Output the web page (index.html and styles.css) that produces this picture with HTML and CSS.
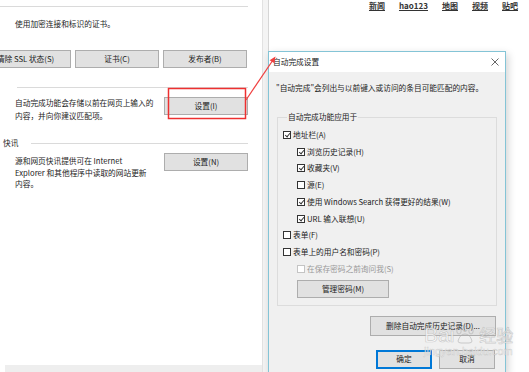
FILE: index.html
```html
<!DOCTYPE html>
<html lang="zh-CN">
<head>
<meta charset="utf-8">
<title>自动完成设置</title>
<link rel="stylesheet" href="styles.css">
</head>
<body>
<div class="desktop">
  <section class="options">
    <div class="rule top-rule"></div>
    <p class="cert-text">使用加密连接和标识的证书。</p>
    <div class="btn-row">
      <button class="btn wide ssl">清除 SSL 状态(S)</button>
      <button class="btn wide">证书(C)</button>
      <button class="btn wide">发布者(B)</button>
    </div>
    <div class="rule sep"></div>
    <div class="section auto">
      <p class="desc">自动完成功能会存储以前在网页上输入的<br>内容，并向你建议匹配项。</p>
      <button class="btn wide side">设置(I)</button>
    </div>
    <div class="heading"><span>快讯</span><div class="heading-line"></div></div>
    <div class="section feeds">
      <p class="desc">源和网页快讯提供可在 Internet<br>Explorer 和其他程序中读取的网站更新<br>内容。</p>
      <button class="btn wide side">设置(N)</button>
    </div>
    <div class="options-foot"></div>
  </section>
  <div class="frame"></div>
  <main class="page">
    <nav class="links">
      <a>新闻</a><a>hao123</a><a>地图</a><a>视频</a><a>贴吧</a>
    </nav>
  </main>
</div>

<div class="dialog">
  <div class="titlebar">
    <span class="title">自动完成设置</span>
    <svg class="close" width="8" height="8" viewBox="0 0 8 8"><path d="M0.5 0.5 L7.5 7.5 M7.5 0.5 L0.5 7.5" stroke="#555" stroke-width="0.9" fill="none"/></svg>
  </div>
  <div class="dialog-body">
    <p class="intro">"自动完成"会列出与以前键入或访问的条目可能匹配的内容。</p>
    <fieldset class="group">
      <legend>自动完成功能应用于</legend>
      <label class="row"><span class="cb checked"></span>地址栏(A)</label>
      <label class="row sub"><span class="cb checked"></span>浏览历史记录(H)</label>
      <label class="row sub"><span class="cb checked"></span>收藏夹(V)</label>
      <label class="row sub"><span class="cb"></span>源(E)</label>
      <label class="row sub"><span class="cb checked"></span>使用 Windows Search 获得更好的结果(W)</label>
      <label class="row sub"><span class="cb checked"></span>URL 输入联想(U)</label>
      <label class="row"><span class="cb"></span>表单(F)</label>
      <label class="row"><span class="cb"></span>表单上的用户名和密码(P)</label>
      <label class="row sub disabled"><span class="cb"></span>在保存密码之前询问我(S)</label>
      <button class="btn manage">管理密码(M)</button>
    </fieldset>
    <div class="delete-row"><button class="btn delete">删除自动完成历史记录(D)...</button></div>
    <div class="action-row">
      <button class="btn action default">确定</button>
      <button class="btn action">取消</button>
    </div>
  </div>
</div>

<div class="watermark">
  <div class="wm-logo"><span>Bai</span><svg class="paw" width="22" height="18" viewBox="0 0 22 18"><g fill="none" stroke="rgba(170,170,170,0.55)" stroke-width="1"><ellipse cx="5" cy="5" rx="2.2" ry="3"/><ellipse cx="11" cy="3" rx="2.2" ry="2.6"/><ellipse cx="17" cy="5" rx="2.2" ry="3"/><path d="M4 15 Q6 8 11 8 Q16 8 18 15 Q18 17 15 17 L7 17 Q4 17 4 15 Z"/></g></svg><span class="wm-cn">经验</span></div>
  <div class="wm-url">jingyan.baidu.com</div>
</div>

<svg class="annotation" width="529" height="372" viewBox="0 0 529 372">
  <rect x="168.5" y="88.5" width="77" height="30" fill="none" stroke="#ee3030" stroke-width="1.5"/>
  <path d="M246 100 L273 60" stroke="#f04040" stroke-width="1.2" fill="none"/>
  <path d="M275.5 56.5 L269.6 60.2 L274.4 63.2 Z" fill="#f04040"/>
</svg>
</body>
</html>
```
FILE: styles.css
```css
* { box-sizing: border-box; }
html, body { margin: 0; padding: 0; }
body {
  width: 529px;
  height: 372px;
  overflow: hidden;
  position: relative;
  background: #ffffff;
  font-family: "Noto Sans CJK SC", "Noto Sans", sans-serif;
  font-size: 7.7px;
  color: #222;
}
p { margin: 0; }

.desktop {
  display: flex;
  height: 372px;
}

/* left Internet Options window */
.options {
  width: 262px;
  flex: none;
  display: flex;
  flex-direction: column;
  background: #fff;
  padding-right: 14px;
}
.rule { height: 1px; background: #dadada; }
.top-rule { margin-top: 6px; }
.cert-text { margin: 11px 0 0 15px; line-height: 12px; }
.btn-row {
  display: flex;
  gap: 4px;
  margin: 20px 0 0 -13px;
}
.btn {
  font-family: inherit;
  font-size: 7.7px;
  color: #222;
  background: #e1e1e1;
  border: 1px solid #adadad;
  padding: 0;
  margin: 0;
  line-height: 1;
  white-space: nowrap;
}
.wide { width: 84px; height: 18px; flex: none; }
.ssl { padding-right: 7px; }
.sep { margin: 19px 0 0 17px; }
.section {
  display: flex;
  justify-content: space-between;
  align-items: flex-start;
  padding-left: 15px;
}
.auto { margin-top: 8px; }
.auto .desc { line-height: 13px; }
.auto .side { margin-top: 1px; }
.heading {
  display: flex;
  align-items: center;
  margin: 16px 0 0 3px;
  line-height: 10px;
}
.heading-line { flex: 1; height: 1px; background: #dadada; margin: 1px 0 0 13px; }
.feeds { margin-top: 5px; }
.feeds .desc { line-height: 11.5px; margin-top: 2px; }
.options-foot {
  margin: auto -14px 0 5px;
  height: 7px;
  background: #eeeeee;
}

.frame {
  width: 7px;
  flex: none;
  background: #f4f4f4;
  border-left: 1px solid #e2e2e2;
  border-right: 1px solid #d6d6d6;
}

.page { flex: 1; }
.links {
  display: flex;
  justify-content: flex-end;
  gap: 14px;
  padding-right: 11px;
  font-size: 8px;
  line-height: 11px;
}
.links a {
  color: #333;
  text-decoration: underline;
  font-weight: 600;
}

/* dialog */
.dialog {
  position: absolute;
  left: 268px;
  top: 51px;
  width: 238px;
  height: 322px;
  background: #f0f0f0;
  border: 1px solid #84c4d6;
  box-shadow: 2px 3px 8px rgba(0, 0, 0, 0.18);
}
.titlebar {
  height: 20px;
  background: #fff;
  display: flex;
  align-items: center;
  justify-content: space-between;
  padding: 0 6px 0 4px;
}
.title { line-height: 10px; color: #222; }
.close { display: block; }
.dialog-body { padding: 0 8px 0 7px; }
.intro { margin-top: 11px; line-height: 10px; }
.group {
  margin: 19px 0 0 1px;
  width: 220px;
  padding: 4.5px 0 7px 5px;
  border: 1px solid #dcdcdc;
  display: flex;
  flex-direction: column;
  align-items: flex-start;
}
.group legend {
  margin-left: 4px;
  padding: 0 1px;
  line-height: 10px;
}
.row {
  display: flex;
  align-items: center;
  height: 16.75px;
  line-height: 10px;
  white-space: nowrap;
}
.row.sub { padding-left: 14px; }
.cb {
  width: 8px;
  height: 8px;
  flex: none;
  margin-right: 2px;
  border: 1px solid #333;
  background: #fff;
  position: relative;
}
.cb.checked::after {
  content: "";
  position: absolute;
  left: 1.8px;
  top: 0px;
  width: 2px;
  height: 4.3px;
  border-right: 1px solid #333;
  border-bottom: 1px solid #333;
  transform: rotate(40deg);
}
.row.disabled { color: #999; }
.row.disabled .cb { border-color: #c4c4c4; }
.manage {
  margin: 2.5px 0 0 14px;
  width: 92px;
  height: 18px;
}
.delete-row {
  display: flex;
  justify-content: flex-end;
  margin-top: 10px;
}
.delete { width: 126px; height: 20px; margin-right: 1px; }
.action-row {
  display: flex;
  justify-content: flex-end;
  gap: 7px;
  margin-top: 14px;
  padding-right: 2px;
}
.action { width: 56px; height: 19px; }
.action.default {
  border-color: #0078d7;
  box-shadow: inset 0 0 0 1px #0078d7;
}

/* watermark */
.watermark {
  position: absolute;
  left: 424px;
  top: 324px;
  pointer-events: none;
}
.wm-logo {
  display: flex;
  align-items: center;
  font-family: "Liberation Sans", sans-serif;
  font-size: 21px;
  line-height: 22px;
  color: rgba(255, 255, 255, 0.75);
  -webkit-text-stroke: 0.7px rgba(160, 160, 160, 0.5);
}
.wm-cn {
  font-family: "Noto Sans CJK SC", sans-serif;
  font-size: 17px;
  margin-left: 3px;
}
.paw { display: block; }
.wm-url {
  font-family: "Liberation Sans", sans-serif;
  font-size: 11px;
  line-height: 12px;
  margin-top: -1px;
  color: rgba(255, 255, 255, 0.75);
  -webkit-text-stroke: 0.5px rgba(160, 160, 160, 0.45);
}

.annotation {
  position: absolute;
  left: 0;
  top: 0;
  pointer-events: none;
}
```
